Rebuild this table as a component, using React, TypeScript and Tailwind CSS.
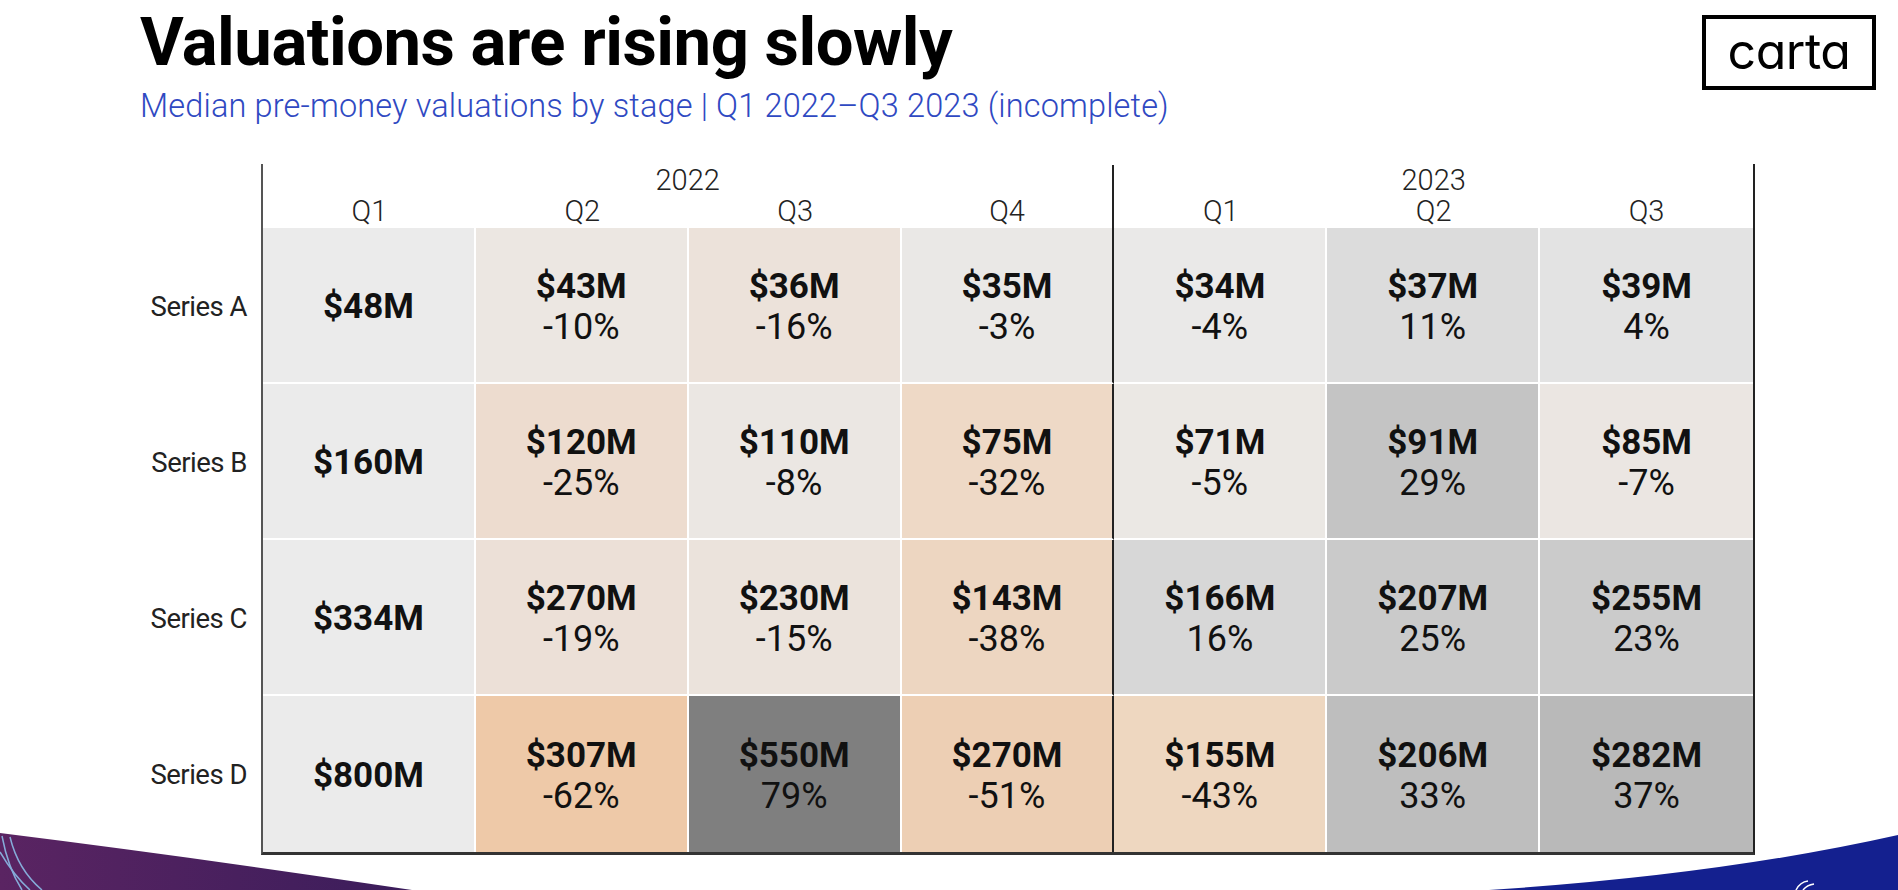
import React from 'react';

type Cell = { v: string; p?: string; bg: string };

const QUARTERS = ['Q1', 'Q2', 'Q3', 'Q4', 'Q1', 'Q2', 'Q3'];

const ROWS: { label: string; cells: Cell[] }[] = [
  {
    label: 'Series A',
    cells: [
      { v: '$48M', bg: 'bg-[#ebebeb]' },
      { v: '$43M', p: '-10%', bg: 'bg-[#ece7e2]' },
      { v: '$36M', p: '-16%', bg: 'bg-[#ece2da]' },
      { v: '$35M', p: '-3%', bg: 'bg-[#eae8e6]' },
      { v: '$34M', p: '-4%', bg: 'bg-[#eae9e8]' },
      { v: '$37M', p: '11%', bg: 'bg-[#dcdcdc]' },
      { v: '$39M', p: '4%', bg: 'bg-[#e3e3e3]' },
    ],
  },
  {
    label: 'Series B',
    cells: [
      { v: '$160M', bg: 'bg-[#ebebeb]' },
      { v: '$120M', p: '-25%', bg: 'bg-[#eddccf]' },
      { v: '$110M', p: '-8%', bg: 'bg-[#ebe7e3]' },
      { v: '$75M', p: '-32%', bg: 'bg-[#eed9c6]' },
      { v: '$71M', p: '-5%', bg: 'bg-[#ebe8e4]' },
      { v: '$91M', p: '29%', bg: 'bg-[#c4c4c4]' },
      { v: '$85M', p: '-7%', bg: 'bg-[#ebe6e2]' },
    ],
  },
  {
    label: 'Series C',
    cells: [
      { v: '$334M', bg: 'bg-[#ebebeb]' },
      { v: '$270M', p: '-19%', bg: 'bg-[#ece0d7]' },
      { v: '$230M', p: '-15%', bg: 'bg-[#ebe3dc]' },
      { v: '$143M', p: '-38%', bg: 'bg-[#edd6c1]' },
      { v: '$166M', p: '16%', bg: 'bg-[#d7d7d7]' },
      { v: '$207M', p: '25%', bg: 'bg-[#cacaca]' },
      { v: '$255M', p: '23%', bg: 'bg-[#cbcbcb]' },
    ],
  },
  {
    label: 'Series D',
    cells: [
      { v: '$800M', bg: 'bg-[#ebebeb]' },
      { v: '$307M', p: '-62%', bg: 'bg-[#eec9a8]' },
      { v: '$550M', p: '79%', bg: 'bg-[#7f7f7f]' },
      { v: '$270M', p: '-51%', bg: 'bg-[#edcfb4]' },
      { v: '$155M', p: '-43%', bg: 'bg-[#eed7c0]' },
      { v: '$206M', p: '33%', bg: 'bg-[#bebebe]' },
      { v: '$282M', p: '37%', bg: 'bg-[#b9b9b9]' },
    ],
  },
];

function Swooshes() {
  return (
    <svg className="absolute left-0 bottom-0" width="1898" height="60" viewBox="0 830 1898 60">
      <defs>
        <linearGradient id="purple" x1="0" y1="0" x2="1" y2="0">
          <stop offset="0" stopColor="#5a2462" />
          <stop offset="1" stopColor="#3b1d5b" />
        </linearGradient>
      </defs>
      <path d="M0 833 Q 200 858 412 890 L 0 890 Z" fill="url(#purple)" />
      <path d="M2 836 Q 8 868 22 890" stroke="#86acd9" strokeWidth="1.5" fill="none" />
      <path d="M10 837 Q 18 870 42 890" stroke="#86acd9" strokeWidth="1.5" fill="none" />
      <path d="M0 852 Q 14 876 30 890" stroke="#86acd9" strokeWidth="1.5" fill="none" />
      <path d="M1489 890 Q 1720 875 1898 835 L 1898 890 Z" fill="#14208f" />
      <path d="M1796 890 Q 1800 882 1808 881" stroke="#ffffff" strokeWidth="1.5" fill="none" />
      <path d="M1803 890 Q 1807 885 1814 884" stroke="#ffffff" strokeWidth="1.5" fill="none" />
    </svg>
  );
}

export default function App() {
  return (
    <div className="relative w-[1898px] h-[890px] overflow-hidden bg-white font-['Roboto',sans-serif] text-[#111]">
      {/* header */}
      <div className="flex justify-between pl-[140px] pr-[22px]">
        <div className="pt-[9px]">
          <h1 className="text-[67px] leading-none font-bold tracking-[-0.5px] text-black">Valuations are rising slowly</h1>
          <p className="mt-[14px] text-[32.5px] leading-none font-light tracking-[0.15px] text-[#2f49c2]">
            Median pre-money valuations by stage | Q1 2022–Q3 2023 (incomplete)
          </p>
        </div>
        <div className="mt-[15px] w-[174px] h-[75px] border-4 border-black flex items-center justify-center">
          <span className="font-['Inter',sans-serif] [font-feature-settings:'cv11'] text-[50px] leading-none font-normal tracking-[-0.5px] -mt-[3px] text-black">carta</span>
        </div>
      </div>

      {/* table */}
      <div className="mt-[41px] flex">
        <div className="w-[261px] shrink-0 pt-[64px] flex flex-col">
          {ROWS.map(r => (
            <div key={r.label} className="h-[156px] flex items-center justify-end pr-[14px] pt-[2px] text-[27.5px] tracking-[-0.5px] text-[#222]">
              {r.label}
            </div>
          ))}
        </div>

        <div className="w-[1494px] border-l-2 border-r-2 border-b-[3px] border-l-[#555] border-r-[#222] border-b-[#333]">
          <div className="grid grid-cols-7 pt-[1px] text-[29px] leading-none text-[#222] font-light">
            <div className="col-span-4 h-[31px] flex items-center justify-center border-r-2 border-[#222]">2022</div>
            <div className="col-span-3 h-[31px] flex items-center justify-center">2023</div>
            {QUARTERS.map((q, i) => (
              <div key={i} className={`h-[32px] flex items-center justify-center ${i === 3 ? 'border-r-2 border-[#222]' : ''}`}>
                {q}
              </div>
            ))}
          </div>

          <div className="grid grid-cols-7">
            {ROWS.map((r, ri) =>
              r.cells.map((c, ci) => (
                <div
                  key={`${ri}-${ci}`}
                  className={`h-[156px] flex flex-col items-center justify-center ${c.p ? 'pt-[5px]' : 'pt-[4px]'} ${c.bg} ${
                    ci === 3 ? 'border-r-2 border-r-[#222]' : ci < 6 ? 'border-r-2 border-r-white' : ''
                  } ${ri < 3 ? 'border-b-2 border-b-white' : ''}`}
                >
                  <div className="text-[35px] leading-[41px] font-bold">{c.v}</div>
                  {c.p && <div className="text-[36px] leading-[41px] font-normal">{c.p}</div>}
                </div>
              ))
            )}
          </div>
        </div>
      </div>

      <Swooshes />
    </div>
  );
}
